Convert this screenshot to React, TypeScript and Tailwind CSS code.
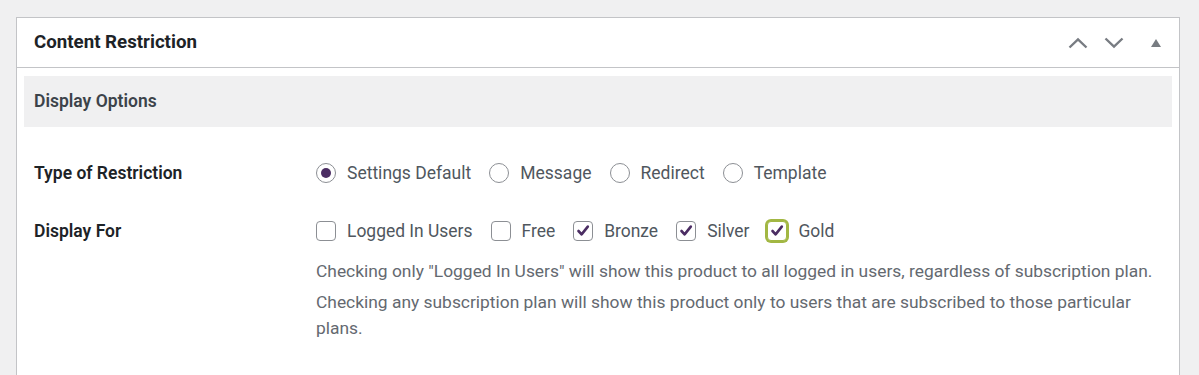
import React from 'react';

const font = { fontFamily: 'Roboto, "Liberation Sans", sans-serif' };

const Radio: React.FC<{ label: string; checked?: boolean }> = ({ label, checked }) => (
  <label className="flex items-center mr-[18px]">
    <span className="w-5 h-5 rounded-full border border-[#8c8f94] bg-white flex items-center justify-center">
      {checked && <span className="w-[10px] h-[10px] rounded-full bg-[#4b2d63]" />}
    </span>
    <span className="ml-[11px] text-[17.5px] text-[#50575e]">{label}</span>
  </label>
);

const Check: React.FC<{ label: string; checked?: boolean; focus?: boolean }> = ({ label, checked, focus }) => (
  <label className="flex items-center mr-[18px]">
    <span
      className={
        focus
          ? 'w-5 h-5 rounded-[4px] border border-[#a2b743] shadow-[0_0_0_2px_#a2b743] bg-white flex items-center justify-center'
          : 'w-5 h-5 rounded-[4px] border border-[#8c8f94] bg-white flex items-center justify-center'
      }
    >
      {checked && (
        <svg width="14" height="14" viewBox="0 0 14 14" fill="none">
          <path d="M2.5 7 L5.6 10.4 L11.8 2.6" stroke="#4b2d63" strokeWidth="2.6" strokeLinecap="round" strokeLinejoin="round" />
        </svg>
      )}
    </span>
    <span className="ml-[11px] text-[17.45px] text-[#50575e]">{label}</span>
  </label>
);

export default function App() {
  return (
    <div className="min-h-[375px] bg-[#f0f0f1] pt-[17px] px-4" style={font}>
      <div className="w-[1164px] bg-white border border-[#c3c4c7] pb-[60px]">
        <div className="h-[50px] flex items-center justify-between pl-[17px] pr-[5px] border-b border-[#c3c4c7]">
          <h2 className="text-[18.7px] font-bold text-[#1d2327]">Content Restriction</h2>
          <div className="flex items-center">
            <button className="w-9 h-9 flex items-center justify-center">
              <svg width="20" height="12" viewBox="0 0 20 12" fill="none">
                <path d="M1.5 10.5 L10 2.5 L18.5 10.5" stroke="#787c82" strokeWidth="2.4" />
              </svg>
            </button>
            <button className="w-9 h-9 flex items-center justify-center">
              <svg width="20" height="12" viewBox="0 0 20 12" fill="none">
                <path d="M1.5 1.5 L10 9.5 L18.5 1.5" stroke="#787c82" strokeWidth="2.4" />
              </svg>
            </button>
            <button className="w-9 h-9 ml-[6px] flex items-center justify-center">
              <svg width="10" height="8" viewBox="0 0 10 8">
                <path d="M5 0 L10 8 L0 8 Z" fill="#787c82" />
              </svg>
            </button>
          </div>
        </div>

        <div className="mt-2 mx-[7px] h-[51px] bg-[#f0f0f1] flex items-center px-[10px]">
          <h3 className="text-[17.5px] font-semibold text-[#3c434a]">Display Options</h3>
        </div>

        <div className="px-[17px] mt-[34px]">
          <div className="flex items-center h-6">
            <div className="w-[282px] text-[17.5px] font-semibold text-[#1d2327]">Type of Restriction</div>
            <div className="flex items-center">
              <Radio label="Settings Default" checked />
              <Radio label="Message" />
              <Radio label="Redirect" />
              <Radio label="Template" />
            </div>
          </div>

          <div className="flex mt-[34px]">
            <div className="w-[282px] h-6 flex items-center text-[17.5px] font-semibold text-[#1d2327]">Display For</div>
            <div className="flex-1 pr-[4px]">
              <div className="flex items-center h-6">
                <Check label="Logged In Users" />
                <Check label="Free" />
                <Check label="Bronze" checked />
                <Check label="Silver" checked />
                <Check label="Gold" checked focus />
              </div>
              <p className="mt-[15px] text-[17.4px] leading-[26px] text-[#646970]">
                Checking only "Logged In Users" will show this product to all logged in users, regardless of subscription plan.
              </p>
              <p className="mt-[5px] text-[17.4px] leading-[26px] text-[#646970]">
                Checking any subscription plan will show this product only to users that are subscribed to those particular plans.
              </p>
            </div>
          </div>
        </div>
      </div>
    </div>
  );
}
